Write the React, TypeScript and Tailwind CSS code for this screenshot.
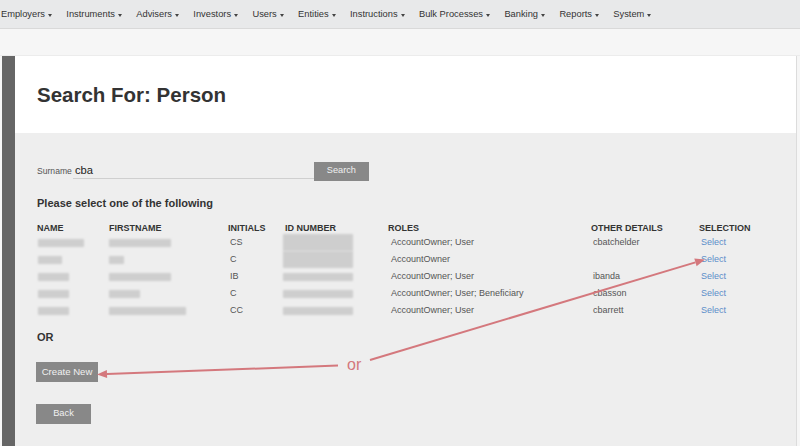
import React from "react";

const navItems = [
  "Employers",
  "Instruments",
  "Advisers",
  "Investors",
  "Users",
  "Entities",
  "Instructions",
  "Bulk Processes",
  "Banking",
  "Reports",
  "System",
];

type Row = {
  name: number;
  first: number;
  initials: string;
  id: number;
  idTall?: boolean;
  roles: string;
  other: string;
};

const rows: Row[] = [
  { name: 46, first: 62, initials: "CS", id: 70, idTall: true, roles: "AccountOwner; User", other: "cbatchelder" },
  { name: 24, first: 15, initials: "C", id: 70, idTall: true, roles: "AccountOwner", other: "" },
  { name: 31, first: 62, initials: "IB", id: 70, roles: "AccountOwner; User", other: "ibanda" },
  { name: 31, first: 31, initials: "C", id: 70, roles: "AccountOwner; User; Beneficiary", other: "cbasson" },
  { name: 31, first: 77, initials: "CC", id: 70, roles: "AccountOwner; User", other: "cbarrett" },
];

const cols = "grid grid-cols-[72px_119px_57px_103px_203px_108px_1fr]";

function Redacted({ w, h = 8 }: { w: number; h?: number }) {
  return (
    <div
      className="bg-[#cbcbcb] blur-[1.2px] opacity-90"
      style={{ width: w, height: h }}
    />
  );
}

function Caret() {
  return (
    <span className="inline-block w-0 h-0 border-l-[2.5px] border-r-[2.5px] border-t-[3px] border-l-transparent border-r-transparent border-t-[#444]" />
  );
}

function Annotation() {
  const c = "#d4787d";
  return (
    <svg
      className="absolute left-0 top-0 pointer-events-none"
      width={800}
      height={446}
      viewBox="0 0 800 446"
    >
      <line x1={370} y1={360} x2={695.4} y2={262.4} stroke={c} strokeWidth={2} />
      <polygon points="705,259.5 696.6,266.2 694.3,258.6" fill={c} />
      <line x1={338} y1={365.5} x2={107} y2={374.1} stroke={c} strokeWidth={2} />
      <polygon points="97,374.5 107.15,378.1 106.85,370.1" fill={c} />
      <text
        x={347}
        y={369.5}
        fill={c}
        fontSize={16}
        fontFamily="'Liberation Sans', Arial, sans-serif"
      >
        or
      </text>
    </svg>
  );
}

export default function App() {
  return (
    <div className="relative w-[800px] h-[446px] overflow-hidden bg-[#f6f6f6] font-['Liberation_Sans',Arial,sans-serif]">
      {/* top menu */}
      <div className="h-[29px] pt-[2px] bg-[#e8e9ea] border-b border-[#d9d9d9] flex items-center pl-[1px] gap-[14.4px] text-[9.3px] text-[#333]">
        {navItems.map((n) => (
          <div key={n} className="flex items-center gap-[3px] whitespace-nowrap">
            <span>{n}</span>
            <Caret />
          </div>
        ))}
      </div>

      <div className="h-[27px] border-b border-[#ececec]" />

      <div className="flex pl-[2px] pr-[3px] h-[391px]">
        <div className="w-[13px] bg-[#666666]" />
        <div className="flex-1 flex flex-col border-r border-[#dcdcdc]">
          {/* page header */}
          <div className="h-[77px] pt-[2px] bg-white flex items-center px-[22px]">
            <h1 className="text-[20.5px] font-bold text-[#333]">Search For: Person</h1>
          </div>

          {/* search body */}
          <div className="flex-1 bg-[#eeeeee] pl-[22px] pt-[28px] text-[#333]">
            <div className="flex items-center h-[20px]">
              <span className="text-[8.6px] text-[#555] leading-none">Surname</span>
              <div className="ml-[1px] w-[241px] h-[16px] border-b border-[#cfcfcf] flex items-center pl-[2px] text-[11.2px] text-[#222]">
                cba
              </div>
              <button className="h-[19px] w-[55px] bg-[#888888] text-[#f0f0f0] text-[9.2px] leading-none">
                Search
              </button>
            </div>

            <div className="mt-[16px] text-[11px] leading-[13px] font-bold">
              Please select one of the following
            </div>

            <div className="mt-[12px]">
              <div className={`${cols} h-[12px] items-center text-[9px] font-bold text-[#333] uppercase leading-none`}>
                <div>Name</div>
                <div>Firstname</div>
                <div>Initials</div>
                <div>ID Number</div>
                <div>Roles</div>
                <div>Other Details</div>
                <div>Selection</div>
              </div>
              {rows.map((r, i) => (
                <div key={i} className={`${cols} h-[17px] items-center text-[9px] text-[#555] leading-none`}>
                  <div className="pl-[1px]">
                    <Redacted w={r.name} />
                  </div>
                  <div>
                    <Redacted w={r.first} />
                  </div>
                  <div className="pl-[2px]">{r.initials}</div>
                  <div className="-ml-[2px]">
                    <Redacted w={r.id} h={r.idTall ? 17 : 8} />
                  </div>
                  <div className="pl-[3px]">{r.roles}</div>
                  <div className="pl-[2px]">{r.other}</div>
                  <div className="pl-[2px] text-[#5b8dc9]">Select</div>
                </div>
              ))}
            </div>

            <div className="mt-[12px] text-[11px] leading-[13px] font-bold">OR</div>

            <button className="mt-[18px] -ml-[1px] h-[20px] w-[62px] bg-[#888888] text-[#f0f0f0] text-[9.6px] leading-none block">
              Create New
            </button>

            <button className="mt-[22px] -ml-[1px] h-[20px] w-[55px] bg-[#888888] text-[#f0f0f0] text-[9.3px] leading-none block">
              Back
            </button>
          </div>
        </div>
      </div>

      <Annotation />
    </div>
  );
}
